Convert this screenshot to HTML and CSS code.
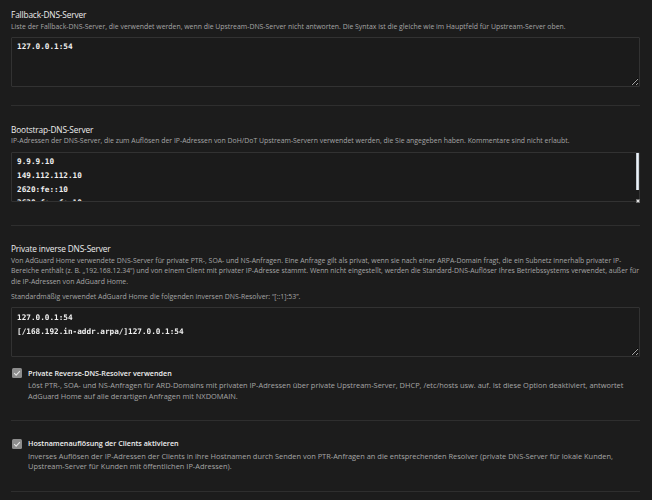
FILE: index.html
```html
<!DOCTYPE html>
<html lang="de">

<head>
  <meta charset="UTF-8">
  <meta name="viewport" content="width=device-width, initial-scale=1.0">
  <title>DNS-Einstellungen</title>
  <link rel="stylesheet" href="styles.css">
</head>

<body>
  <main class="Settings">
    <div class="Field">
      <label class="Field-title" for="fallbackDns">Fallback-DNS-Server</label>
      <div class="Field-desc">Liste der Fallback-DNS-Server, die verwendet werden, wenn die Upstream-DNS-Server nicht antworten. Die Syntax ist die gleiche wie im Hauptfeld für Upstream-Server oben.</div>
      <div class="InputWrap">
        <textarea class="Field-input" id="fallbackDns" spellcheck="false">127.0.0.1:54</textarea>
      </div>
    </div>

    <div class="Field Field--scroll">
      <label class="Field-title" for="bootstrapDns">Bootstrap-DNS-Server</label>
      <div class="Field-desc">IP-Adressen der DNS-Server, die zum Auflösen der IP-Adressen von DoH/DoT Upstream-Servern verwendet werden, die Sie angegeben haben. Kommentare sind nicht erlaubt.</div>
      <div class="InputWrap">
        <textarea class="Field-input Field-input--fixed" id="bootstrapDns" spellcheck="false">9.9.9.10
149.112.112.10
2620:fe::10
2620:fe::fe:10</textarea>
        <span class="ScrollThumb"></span>
        <span class="ScrollCorner"></span>
      </div>
    </div>

    <div class="Field">
      <label class="Field-title" for="privateDns">Private inverse DNS-Server</label>
      <div class="Field-desc">Von AdGuard Home verwendete DNS-Server für private PTR-, SOA- und NS-Anfragen. Eine Anfrage gilt als privat, wenn sie nach einer ARPA-Domain fragt, die ein Subnetz innerhalb privater IP-Bereiche enthält (z. B. „192.168.12.34“) und von einem Client mit privater IP-Adresse stammt. Wenn nicht eingestellt, werden die Standard-DNS-Auflöser Ihres Betriebssystems verwendet, außer für die IP-Adressen von AdGuard Home.</div>
      <div class="Field-desc Field-desc--gap">Standardmäßig verwendet AdGuard Home die folgenden inversen DNS-Resolver: “[::1]:53”.</div>
      <div class="InputWrap">
        <textarea class="Field-input" id="privateDns" spellcheck="false">127.0.0.1:54
[/168.192.in-addr.arpa/]127.0.0.1:54</textarea>
      </div>

      <label class="Check">
        <input type="checkbox" class="Check-input" checked>
        <span class="Check-box">
          <svg viewBox="0 0 10 10"><path d="M2.2 5.2l1.9 1.9 3.8-4" /></svg>
        </span>
        <span class="Check-text">
          <span class="Check-label">Private Reverse-DNS-Resolver verwenden</span>
          <span class="Check-desc">Löst PTR-, SOA- und NS-Anfragen für ARD-Domains mit privaten IP-Adressen über private Upstream-Server, DHCP, /etc/hosts usw. auf. Ist diese Option deaktiviert, antwortet AdGuard Home auf alle derartigen Anfragen mit NXDOMAIN.</span>
        </span>
      </label>
    </div>

    <div class="Field">
      <label class="Check Check--top">
        <input type="checkbox" class="Check-input" checked>
        <span class="Check-box">
          <svg viewBox="0 0 10 10"><path d="M2.2 5.2l1.9 1.9 3.8-4" /></svg>
        </span>
        <span class="Check-text">
          <span class="Check-label">Hostnamenauflösung der Clients aktivieren</span>
          <span class="Check-desc">Inverses Auflösen der IP-Adressen der Clients in ihre Hostnamen durch Senden von PTR-Anfragen an die entsprechenden Resolver (private DNS-Server für lokale Kunden, Upstream-Server für Kunden mit öffentlichen IP-Adressen).</span>
        </span>
      </label>
    </div>
  </main>
</body>

</html>
```

FILE: styles.css
```css
body {
  background: #1c1c1c;
  color: #e6e6e6;
  font-family: "Open Sans", "Noto Sans", Arial, sans-serif;
  margin: 0;
}

* {
  box-sizing: border-box;
}

.Settings {
  padding: 9px 12px 0 11px;
}

.Field {
  padding: 17.5px 0 18.5px;
  border-bottom: 1px solid #2e2e2e;
}

.Field:first-child {
  padding-top: 0;
}

.Field--scroll {
  padding-bottom: 23px;
}

.Field-title {
  display: block;
  font-size: 8.3px;
  letter-spacing: -0.15px;
  line-height: 12px;
  color: #ededed;
}

.Field-desc {
  display: block;
  margin-top: 0.5px;
  font-size: 6.9px;
  line-height: 10.7px;
  color: #a6a6a6;
}

.Field-desc--gap {
  margin-top: 4.3px;
}

.InputWrap {
  position: relative;
  margin-top: 4.6px;
}

.Field-input {
  display: block;
  width: 100%;
  height: 50px;
  margin: 0;
  padding: 2.5px 5px;
  background: #1b1b1b;
  border: 1px solid #323232;
  border-radius: 1px;
  color: #f0f0f0;
  font-family: "DejaVu Sans Mono", "Liberation Mono", monospace;
  font-weight: bold;
  font-size: 7.7px;
  line-height: 13.7px;
  resize: vertical;
  color-scheme: dark;
  outline: 0;
}

.Field-input--fixed {
  resize: none;
}

.ScrollThumb {
  position: absolute;
  top: 1px;
  right: 1px;
  width: 3.5px;
  height: 37px;
  background: linear-gradient(to right, #a9b3bd, #eef3f8, #b7c1cb);
  pointer-events: none;
}

.ScrollCorner {
  position: absolute;
  right: 0;
  bottom: -1px;
  width: 4px;
  height: 4px;
  background: #e2e2e2;
  border: 1px solid #707070;
  pointer-events: none;
}

.Check {
  display: flex;
  align-items: flex-start;
  margin-top: 10.3px;
  cursor: pointer;
}

.Check--top {
  margin-top: 0;
}

.Check-input {
  display: none;
}

.Check-box {
  display: flex;
  justify-content: center;
  align-items: center;
  flex-shrink: 0;
  width: 10px;
  height: 10px;
  margin: 0.5px 6px 0 1px;
  background: #8d8d8d;
  border-radius: 1.5px;
}

.Check-box svg {
  display: block;
  width: 10px;
  height: 10px;
  fill: none;
  stroke: #e4e4e4;
  stroke-width: 1.1;
}

.Check-label {
  display: block;
  font-size: 7.2px;
  line-height: 10.7px;
  font-weight: 600;
  color: #f0f0f0;
}

.Check-desc {
  display: block;
  margin-top: 1.7px;
  font-size: 7.43px;
  line-height: 10.7px;
  color: #a6a6a6;
}
```
